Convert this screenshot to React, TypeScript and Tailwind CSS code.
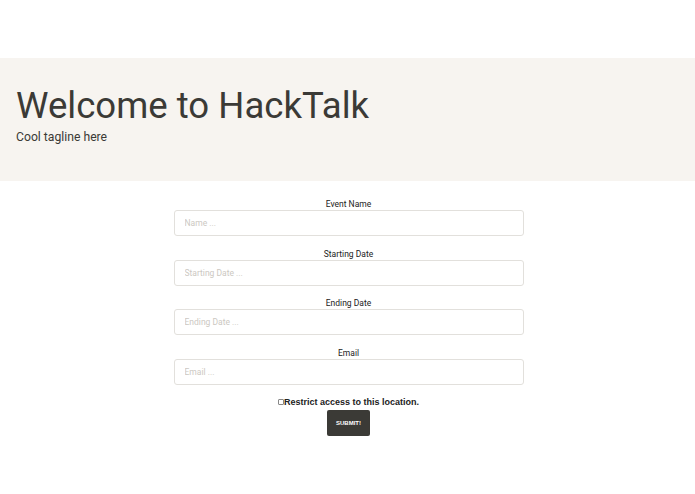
const fields = [
  { label: "Event Name", placeholder: "Name ..." },
  { label: "Starting Date", placeholder: "Starting Date ..." },
  { label: "Ending Date", placeholder: "Ending Date ..." },
  { label: "Email", placeholder: "Email ..." },
];

export default function App() {
  return (
    <div className="h-[494px] overflow-hidden bg-white pt-[58px] font-['Roboto',sans-serif] text-[#3b3a36]">
      <header className="h-[123px] bg-[#f7f4f0] px-4 pt-[26px]">
        <h1 className="text-[36.6px] font-normal leading-[44px]">Welcome to HackTalk</h1>
        <p className="mt-[1px] text-[12.2px] leading-[16px]">Cool tagline here</p>
      </header>
      <form className="mx-auto mt-[18px] flex w-[350px] translate-x-[1px] flex-col items-center">
        {fields.map((f) => (
          <div key={f.label} className="mb-[12.6px] flex w-full flex-col items-center">
            <label className="text-[8.5px] leading-[11px] text-[#222]">{f.label}</label>
            <input
              placeholder={f.placeholder}
              className="h-[26px] w-full rounded-[3px] border border-[#e2e0dc] px-[10px] text-[8.5px] outline-none placeholder:text-[#ccc8c2]"
            />
          </div>
        ))}
        <label className="-mt-[1px] flex items-center font-['Liberation_Sans',sans-serif] text-[9px] font-bold leading-[12px] text-[#222]">
          <input
            type="checkbox"
            className="h-[6px] w-[6px] appearance-none rounded-[1px] border border-[#888] bg-white"
          />
          Restrict access to this location.
        </label>
        <button
          type="button"
          className="mt-[2px] h-[26px] w-[43px] rounded-[2px] bg-[#3b3a36] font-['Liberation_Sans',sans-serif] text-[6px] font-bold text-white"
        >
          SUBMIT!
        </button>
      </form>
    </div>
  );
}
